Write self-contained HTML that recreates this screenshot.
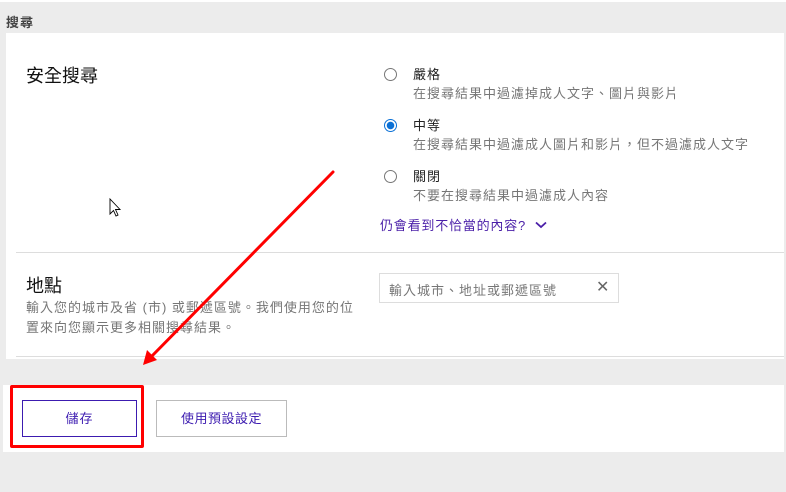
<!DOCTYPE html>
<html><head><meta charset="utf-8"><style>
*{margin:0;padding:0;box-sizing:border-box}
body{width:786px;height:492px;background:#ececec;position:relative;overflow:hidden;font-family:"Liberation Sans","Noto Sans CJK TC",sans-serif;color:#222}
.a{position:absolute;white-space:nowrap}
.top{left:0;top:0;width:786px;height:2px;background:#fff}
.panel{left:6px;top:33px;width:778px;height:326px;background:#fff}
.line{height:1px;background:#ddd}
.r{width:13px;height:13px;border:1px solid #777;border-radius:50%}
.lbl{font-size:13px;color:#222;letter-spacing:1px}
.desc{font-size:13px;color:#767676;letter-spacing:1px}
</style></head><body>
<div class="a top"></div>
<div class="a" style="left:6px;top:12px;font-size:13px;font-weight:bold;color:#444;letter-spacing:1px">搜尋</div>
<div class="a panel"></div>
<div class="a" style="left:26px;top:62px;font-size:18px;color:#111">安全搜尋</div>
<div class="a r" style="left:384px;top:68px"></div>
<div class="a lbl" style="left:413px;top:64px">嚴格</div>
<div class="a desc" style="left:413px;top:83px">在搜尋結果中過濾掉成人文字、圖片與影片</div>
<div class="a r" style="left:384px;top:119px;border-color:#0a70d6;background:radial-gradient(circle,#0a70d6 0 3.5px,#fff 4px)"></div>
<div class="a lbl" style="left:413px;top:115px">中等</div>
<div class="a desc" style="left:413px;top:134px">在搜尋結果中過濾成人圖片和影片，但不過濾成人文字</div>
<div class="a r" style="left:384px;top:170px"></div>
<div class="a lbl" style="left:413px;top:166px">關閉</div>
<div class="a desc" style="left:413px;top:185px">不要在搜尋結果中過濾成人內容</div>
<div class="a" style="left:380px;top:215px;font-size:13px;color:#4a1fa8;letter-spacing:0.8px">仍會看到不恰當的內容?</div>
<svg class="a" style="left:535px;top:221px" width="12" height="8"><path d="M1 1.5l5 4.5 5-4.5" stroke="#4a1fa8" stroke-width="1.8" fill="none"/></svg>
<div class="a line" style="left:16px;top:252px;width:768px"></div>
<div class="a" style="left:26px;top:272px;font-size:18px;color:#111">地點</div>
<div class="a desc" style="left:26px;top:298px;line-height:20px">輸入您的城市及省 (市) 或郵遞區號。我們使用您的位<br>置來向您顯示更多相關搜尋結果。</div>
<div class="a" style="left:379px;top:273px;width:240px;height:30px;border:1px solid #ddd"></div>
<div class="a desc" style="left:389px;top:280px">輸入城市、地址或郵遞區號</div>
<div class="a" style="left:596px;top:277px;font-size:16px;color:#666">✕</div>
<div class="a line" style="left:16px;top:356px;width:768px"></div>
<div class="a" style="left:3px;top:385px;width:781px;height:67px;background:#fff"></div>
<div class="a" style="left:10px;top:385px;width:134px;height:63px;border:3px solid #f00;border-radius:2px"></div>
<div class="a" style="left:22px;top:400px;width:115px;height:37px;border:1px solid #3c1bb0;font-size:13px;color:#3c1bb0;text-align:center;line-height:35px;letter-spacing:1px">儲存</div>
<div class="a" style="left:156px;top:400px;width:131px;height:37px;border:1px solid #bbb;font-size:13px;color:#3c1bb0;text-align:center;line-height:35px;letter-spacing:0.5px">使用預設設定</div>
<svg class="a" style="left:0;top:0" width="786" height="492">
<line x1="333" y1="172" x2="150" y2="358" stroke="#f00" stroke-width="3" stroke-linecap="round"/>
<path d="M143 365 L147 350 L157 360 Z" fill="#f00"/>
<path d="M110 199 L110 214 L113.5 210.5 L116 216 L118 215 L115.5 209.5 L120 209.5 Z" fill="#fff" stroke="#000" stroke-width="0.9"/>
</svg>
</body></html>
